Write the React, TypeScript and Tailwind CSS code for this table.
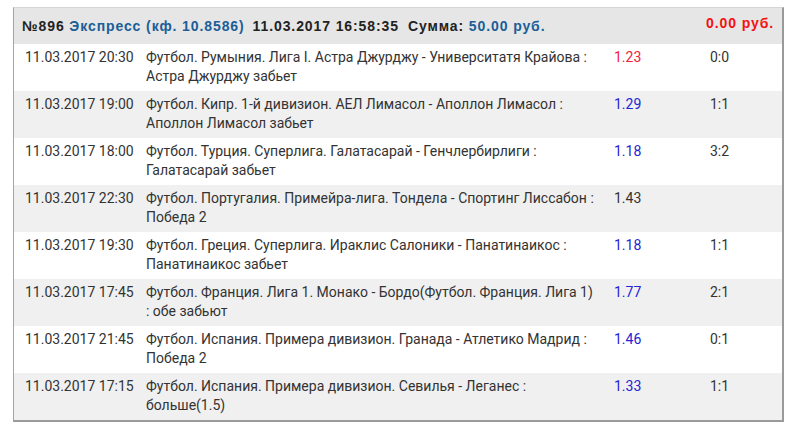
import React from "react";

const rows = [
  { d: "11.03.2017 20:30", t: "Футбол. Румыния. Лига I. Астра Джурджу - Университатя Крайова : Астра Джурджу забьет", k: "1.23", red: true, s: "0:0" },
  { d: "11.03.2017 19:00", t: "Футбол. Кипр. 1-й дивизион. АЕЛ Лимасол - Аполлон Лимасол : Аполлон Лимасол забьет", k: "1.29", s: "1:1" },
  { d: "11.03.2017 18:00", t: "Футбол. Турция. Суперлига. Галатасарай - Генчлербирлиги : Галатасарай забьет", k: "1.18", s: "3:2" },
  { d: "11.03.2017 22:30", t: "Футбол. Португалия. Примейра-лига. Тондела - Спортинг Лиссабон : Победа 2", k: "1.43", s: "", dark: true },
  { d: "11.03.2017 19:30", t: "Футбол. Греция. Суперлига. Ираклис Салоники - Панатинаикос : Панатинаикос забьет", k: "1.18", s: "1:1" },
  { d: "11.03.2017 17:45", t: "Футбол. Франция. Лига 1. Монако - Бордо(Футбол. Франция. Лига 1) : обе забьют", k: "1.77", s: "2:1" },
  { d: "11.03.2017 21:45", t: "Футбол. Испания. Примера дивизион. Гранада - Атлетико Мадрид : Победа 2", k: "1.46", s: "0:1" },
  { d: "11.03.2017 17:15", t: "Футбол. Испания. Примера дивизион. Севилья - Леганес : больше(1.5)", k: "1.33", s: "1:1" },
];

export default function App() {
  return (
    <div className="w-[797px] h-[430px] bg-white pt-[7px] pl-[13px]">
      <div className="w-[771px] border-t border-l border-t-[#d6d6d6] border-l-[#a4a4a4] border-r-2 border-b-2 border-r-[#9a9a9a] border-b-[#9a9a9a]">
        <div
          className="h-[36px] bg-[#e6e6e6] flex justify-between pl-[8px] pr-[8px] text-[14px] font-bold tracking-[0.9px]"
          style={{ fontFamily: '"Liberation Sans", Arial, sans-serif' }}
        >
          <div className="pt-[8px] leading-[20px] text-[#222] whitespace-nowrap">
            <span>№896 </span>
            <span className="text-[#1b5e98]">Экспресс (кф. 10.8586)</span>
            <span className="ml-[8px]">11.03.2017 16:58:35</span>
            <span className="ml-[9px]">Сумма: </span>
            <span className="text-[#1b5e98]">50.00 руб.</span>
          </div>
          <div className="pt-[5px] leading-[20px] text-[#f21212] whitespace-nowrap">0.00 руб.</div>
        </div>
        <div style={{ fontFamily: "Roboto, sans-serif" }} className="text-[14px] text-[#333]">
          {rows.map((r, i) => (
            <div
              key={i}
              className={
                "h-[47px] flex items-start pl-[11px] pt-[4px] leading-[19px] " +
                (i % 2 === 1 ? "bg-[#f0f0f0]" : "bg-white")
              }
            >
              <div className="w-[121px] shrink-0 whitespace-nowrap">{r.d}</div>
              <div className="w-[468px] shrink-0 pr-[15px]">{r.t}</div>
              <div className={"w-[96px] shrink-0 " + (r.red ? "text-[#f2203c]" : r.dark ? "text-[#333]" : "text-[#2424d6]")}>{r.k}</div>
              <div>{r.s}</div>
            </div>
          ))}
        </div>
      </div>
    </div>
  );
}
